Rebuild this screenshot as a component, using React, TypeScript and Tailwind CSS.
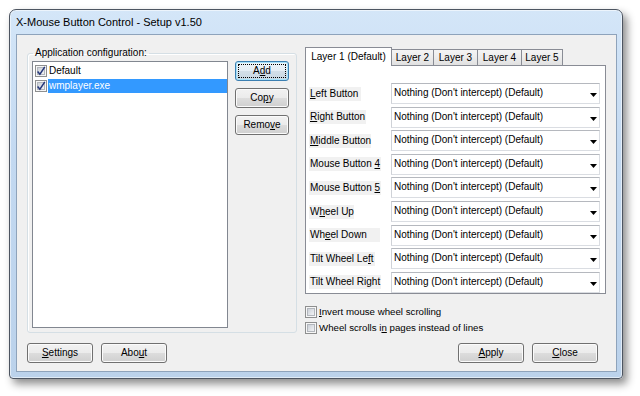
import React from "react";

type Label = [string, string, string];

const mappings: {label: Label; bg: string}[] = [
  {label: ["", "L", "eft Button"], bg: "w-[52px]"},
  {label: ["", "R", "ight Button"], bg: "w-[57px]"},
  {label: ["", "M", "iddle Button"], bg: "w-[62px]"},
  {label: ["Mouse Button ", "4", ""], bg: "w-[72px]"},
  {label: ["Mouse Button ", "5", ""], bg: "w-[72px]"},
  {label: ["W", "h", "eel Up"], bg: "w-[45px]"},
  {label: ["Wh", "e", "el Down"], bg: "w-[71px]"},
  {label: ["Tilt Wheel Le", "f", "t"], bg: "w-[66px]"},
  {label: ["Tilt Wheel Right", "", ""], bg: "w-[72px]"},
];

const tabs = [
  {name: "Layer 2", w: "w-[43px]"},
  {name: "Layer 3", w: "w-[45px]"},
  {name: "Layer 4", w: "w-[45px]"},
  {name: "Layer 5", w: "w-[42px]"},
];

const Accel = ({parts}: {parts: Label}) => (
  <>
    {parts[0]}
    {parts[1] && <span className="underline underline-offset-[1px]">{parts[1]}</span>}
    {parts[2]}
  </>
);

const CheckBox = ({checked}: {checked?: boolean}) => (
  <svg width="12" height="12" viewBox="0 0 12 12" className="shrink-0">
    <defs>
      <linearGradient id="cbInner" x1="0" y1="0" x2="1" y2="1">
        <stop offset="0" stopColor="#c9ced6"/>
        <stop offset="1" stopColor="#f4f5f6"/>
      </linearGradient>
    </defs>
    <rect x="0.5" y="0.5" width="11" height="11" fill="#f7f7f7" stroke="#8e8f8f"/>
    <rect x="2.5" y="2.5" width="7" height="7" fill="url(#cbInner)" stroke="#b2b6bc"/>
    {checked && (
      <path d="M2.6 6.4 L4.9 9.2 L9.8 1.8" fill="none" stroke="#26377a" strokeWidth="1.5"/>
    )}
  </svg>
);

type BtnProps = {
  children: React.ReactNode;
  width: string;
  isDefault?: boolean;
};

const WinButton = ({children, width, isDefault}: BtnProps) => (
  <button
    className={
      isDefault
        ? `${width} h-[20px] shrink-0 rounded-[3px] border border-[#3c7fb1] p-[2px] flex bg-[linear-gradient(to_bottom,#eef5fa_0%,#e4edf4_50%,#d3dfe8_50%,#c8d7e2_100%)] shadow-[inset_0_0_0_1px_#a6e1f9] text-[10px] text-black`
        : `${width} h-[20px] shrink-0 rounded-[3px] border border-[#707070] p-[2px] flex bg-[linear-gradient(to_bottom,#f2f2f2_0%,#ebebeb_50%,#dddddd_50%,#cfcfcf_100%)] shadow-[inset_0_0_0_1px_#fbfbfb] text-[10px] text-black`
    }
  >
    <span
      className={
        isDefault
          ? "flex-1 block text-center leading-[12px] border border-dotted border-black"
          : "flex-1 block text-center leading-[12px] border border-transparent"
      }
    >
      {children}
    </span>
  </button>
);

const Combo = () => (
  <div className="w-[209px] h-[21px] shrink-0 bg-white border border-[#dadde2] border-t-[#b5b8be] border-l-[#cfd2d7] flex items-center pl-[2px] pr-[2px]">
    <span className="flex-1 text-[10px] leading-none whitespace-nowrap -mt-[1px]">
      Nothing (Don't intercept) (Default)
    </span>
    <svg width="7" height="4" viewBox="0 0 7 4" className="mt-[3px]">
      <polygon points="0,0 7,0 3.5,4" fill="#000"/>
    </svg>
  </div>
);

export default function App() {
  return (
    <div className="w-[640px] h-[396px] bg-white pt-[9px] pl-[9px] font-['Liberation_Sans',Arial,sans-serif] text-black">
      <div className="w-[614px] h-[370px] rounded-t-[7px] rounded-b-[4px] border border-[#4d5561] bg-[linear-gradient(to_bottom,#d4e6f8_0%,#c3d9f1_40%,#bbd2eb_100%)] shadow-[inset_0_0_0_1px_rgba(255,255,255,0.55),4px_5px_9px_rgba(0,0,0,0.45)] flex flex-col">
        <div className="h-[24px] pl-[6px] flex items-center text-[11px] leading-none whitespace-nowrap">
          X-Mouse Button Control - Setup v1.50
        </div>

        <div className="ml-[6px] w-[601px] h-[338px] bg-[#f0f0f0] border border-[#8ea3bb] flex flex-col pt-[12px]">
          <div className="flex h-[286px] pl-[10px]">
            <fieldset className="w-[270px] h-[286px] border border-[#d5dfe5] rounded-[3px] pl-[4px] pr-[7px] shadow-[inset_1px_1px_0_#fff]">
              <legend className="ml-[1px] px-[2px] text-[10px] leading-[12px] whitespace-nowrap">
                Application configuration:
              </legend>
              <div className="flex">
                <div className="mt-[2px] w-[196px] h-[267px] bg-white border border-[#828790] pt-[1px] text-[10px] leading-none">
                  <div className="h-[15px] flex items-center pl-[2px]">
                    <CheckBox checked/>
                    <span className="pl-[2px]">Default</span>
                  </div>
                  <div className="h-[15px] flex items-center pl-[2px]">
                    <CheckBox checked/>
                    <span className="ml-[1px] flex-1 h-[14px] flex items-center pl-[1px] bg-[#3399ff] text-white">
                      wmplayer.exe
                    </span>
                  </div>
                </div>
                <div className="ml-[7px] mt-[2px] flex flex-col gap-[7px]">
                  <WinButton width="w-[54px]" isDefault>
                    A<span className="underline">d</span>d
                  </WinButton>
                  <WinButton width="w-[54px]">
                    Co<span className="underline">p</span>y
                  </WinButton>
                  <WinButton width="w-[54px]">
                    Remo<span className="underline">v</span>e
                  </WinButton>
                </div>
              </div>
            </fieldset>

            <div className="ml-[8px] w-[301px] flex flex-col">
              <div className="h-[18px] flex items-end text-[10px] leading-none">
                <div className="w-[87px] h-[19px] -mb-px relative z-10 bg-white border border-b-0 border-[#898c95] flex items-start justify-center pt-[4px] whitespace-nowrap">
                  Layer 1 (Default)
                </div>
                {tabs.map((t) => (
                  <div
                    key={t.name}
                    className={`${t.w} h-[16px] -ml-px border border-b-0 border-[#898c95] bg-[linear-gradient(to_bottom,#f4f4f4_0%,#ececec_50%,#e1e1e1_100%)] flex items-center justify-center whitespace-nowrap`}
                  >
                    {t.name}
                  </div>
                ))}
              </div>
              <div className="h-[232px] bg-white border border-[#898c95] pt-[17px] pl-[3px] flex flex-col gap-[2.62px]">
                {mappings.map((m, i) => (
                  <div key={i} className="h-[21px] flex items-center">
                    <div className="w-[82px] shrink-0">
                      <div className={`${m.bg} h-[14px] bg-[#f1f1f1] pl-[1px] text-[10px] leading-[14px] whitespace-nowrap`}>
                        <Accel parts={m.label}/>
                      </div>
                    </div>
                    <Combo/>
                  </div>
                ))}
              </div>
              <div className="mt-[10px] flex flex-col text-[9.7px] leading-none">
                <div className="h-[16px] flex items-center gap-[2px]">
                  <CheckBox/>
                  <span className="whitespace-nowrap">
                    <span className="underline">I</span>nvert mouse wheel scrolling
                  </span>
                </div>
                <div className="h-[16px] flex items-center gap-[2px]">
                  <CheckBox/>
                  <span className="whitespace-nowrap">
                    Wheel scrolls i<span className="underline">n</span> pages instead of lines
                  </span>
                </div>
              </div>
            </div>
          </div>

          <div className="mt-[10px] flex items-center pl-[10px] pr-[18px]">
            <div className="flex gap-[8px]">
              <WinButton width="w-[66px]">
                <span className="underline">S</span>ettings
              </WinButton>
              <WinButton width="w-[66px]">
                Abo<span className="underline">u</span>t
              </WinButton>
            </div>
            <div className="ml-auto flex gap-[8px]">
              <WinButton width="w-[66px]">
                <span className="underline">A</span>pply
              </WinButton>
              <WinButton width="w-[66px]">
                <span className="underline">C</span>lose
              </WinButton>
            </div>
          </div>
        </div>
      </div>
    </div>
  );
}
